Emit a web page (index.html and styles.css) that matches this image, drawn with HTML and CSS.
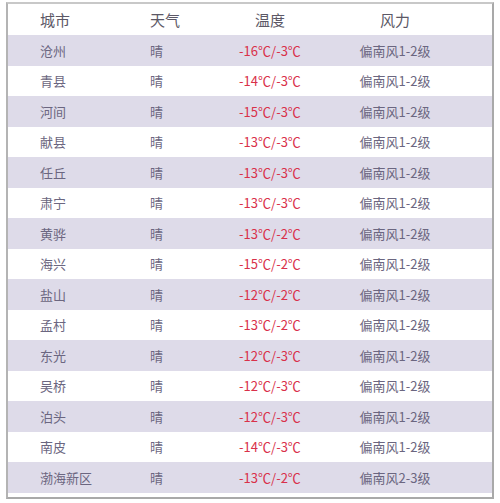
FILE: index.html
```html
<!DOCTYPE html>
<html lang="zh">
<head>
<meta charset="utf-8">
<link rel="stylesheet" href="styles.css">
</head>
<body>
<div class="frame">
  <div class="row head"><span class="c1">城市</span><span class="c2">天气</span><span class="c3">温度</span><span class="c4">风力</span></div>
  <div class="row alt"><span class="c1">沧州</span><span class="c2">晴</span><span class="c3 t">-16℃/-3℃</span><span class="c4">偏南风1-2级</span></div>
  <div class="row"><span class="c1">青县</span><span class="c2">晴</span><span class="c3 t">-14℃/-3℃</span><span class="c4">偏南风1-2级</span></div>
  <div class="row alt"><span class="c1">河间</span><span class="c2">晴</span><span class="c3 t">-15℃/-3℃</span><span class="c4">偏南风1-2级</span></div>
  <div class="row"><span class="c1">献县</span><span class="c2">晴</span><span class="c3 t">-13℃/-3℃</span><span class="c4">偏南风1-2级</span></div>
  <div class="row alt"><span class="c1">任丘</span><span class="c2">晴</span><span class="c3 t">-13℃/-3℃</span><span class="c4">偏南风1-2级</span></div>
  <div class="row"><span class="c1">肃宁</span><span class="c2">晴</span><span class="c3 t">-13℃/-3℃</span><span class="c4">偏南风1-2级</span></div>
  <div class="row alt"><span class="c1">黄骅</span><span class="c2">晴</span><span class="c3 t">-13℃/-2℃</span><span class="c4">偏南风1-2级</span></div>
  <div class="row"><span class="c1">海兴</span><span class="c2">晴</span><span class="c3 t">-15℃/-2℃</span><span class="c4">偏南风1-2级</span></div>
  <div class="row alt"><span class="c1">盐山</span><span class="c2">晴</span><span class="c3 t">-12℃/-2℃</span><span class="c4">偏南风1-2级</span></div>
  <div class="row"><span class="c1">孟村</span><span class="c2">晴</span><span class="c3 t">-13℃/-2℃</span><span class="c4">偏南风1-2级</span></div>
  <div class="row alt"><span class="c1">东光</span><span class="c2">晴</span><span class="c3 t">-12℃/-3℃</span><span class="c4">偏南风1-2级</span></div>
  <div class="row"><span class="c1">吴桥</span><span class="c2">晴</span><span class="c3 t">-12℃/-3℃</span><span class="c4">偏南风1-2级</span></div>
  <div class="row alt"><span class="c1">泊头</span><span class="c2">晴</span><span class="c3 t">-12℃/-3℃</span><span class="c4">偏南风1-2级</span></div>
  <div class="row"><span class="c1">南皮</span><span class="c2">晴</span><span class="c3 t">-14℃/-3℃</span><span class="c4">偏南风1-2级</span></div>
  <div class="row alt"><span class="c1">渤海新区</span><span class="c2">晴</span><span class="c3 t">-13℃/-2℃</span><span class="c4">偏南风2-3级</span></div>
</div>
</body>
</html>
```
FILE: styles.css
```css
html, body {
  margin: 0;
  padding: 0;
  background: #ffffff;
}
body {
  font-family: "Noto Sans CJK SC", "Noto Sans", sans-serif;
  color: #6b6680;
  font-size: 13px;
}
.frame {
  margin: 2px 0 0 6px;
  width: 484px;
  height: 493px;
  border: 2px solid #a9a9a9;
  border-top-color: #c8c8c8;
  border-left-color: #b4b4b4;
  box-sizing: content-box;
  background: #fff;
}
.row {
  display: grid;
  grid-template-columns: 142px 65px 110px 140px 27px;
  height: 30.5px;
  align-items: center;
}
.row.head {
  height: 31px;
  font-size: 15px;
  color: #5c5866;
}
.row.alt {
  background: #dedbe9;
}
.c1 { padding-left: 32px; }
.c2 { text-align: left; }
.c3 { text-align: center; }
.c4 { text-align: center; }
.t { color: #d9304a; }
.row.head .c3 { color: #5c5866; }
```
